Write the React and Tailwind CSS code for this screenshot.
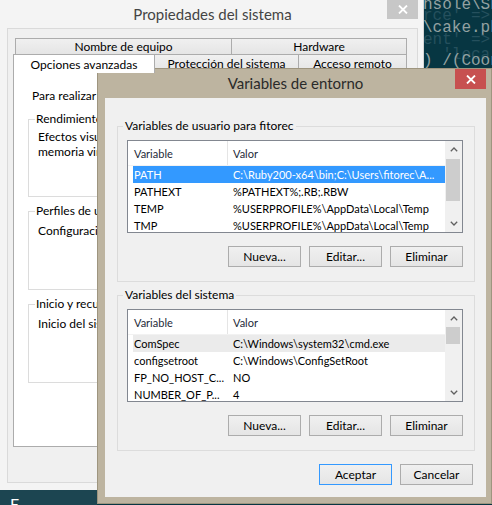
import React from "react";

const userVars = [
  { name: "PATH", value: "C:\\Ruby200-x64\\bin;C:\\Users\\fitorec\\A..." },
  { name: "PATHEXT", value: "%PATHEXT%;.RB;.RBW" },
  { name: "TEMP", value: "%USERPROFILE%\\AppData\\Local\\Temp" },
  { name: "TMP", value: "%USERPROFILE%\\AppData\\Local\\Temp" },
];

const systemVars = [
  { name: "ComSpec", value: "C:\\Windows\\system32\\cmd.exe" },
  { name: "configsetroot", value: "C:\\Windows\\ConfigSetRoot" },
  { name: "FP_NO_HOST_C...", value: "NO" },
  { name: "NUMBER_OF_P...", value: "4" },
];

// terminal text peeking out behind the windows
const termLines = [
  { text: "nsole\\Sh", top: "top-[-3px]", dim: false },
  { text: "rce' =>", top: "top-[8px]", dim: true },
  { text: "\\cake.ph", top: "top-[20px]", dim: false },
  { text: "ent' =>", top: "top-[32px]", dim: true },
  { text: "  'local", top: "top-[47px]", dim: true },
  { text: ") /(Coon", top: "top-[53px]", dim: false },
];

const CloseX = () => (
  <svg width="10" height="9" viewBox="0 0 10 9">
    <path d="M1 0.5 L9 8.5 M9 0.5 L1 8.5" stroke="white" strokeWidth="1.8" fill="none" />
  </svg>
);

const Chevron = ({ down }) => (
  <svg width="8" height="5" viewBox="0 0 8 5">
    <path
      d={down ? "M0.8 0.8 L4 4 L7.2 0.8" : "M0.8 4.2 L4 1 L7.2 4.2"}
      stroke="#606060"
      strokeWidth="1.3"
      fill="none"
    />
  </svg>
);

function Btn({ children, primary }) {
  return (
    <button
      type="button"
      className={
        primary
          ? "flex h-[21px] w-[73px] items-center justify-center border border-[#3399ff] bg-linear-to-b from-[#f0f0f0] to-[#e5e5e5] text-[12px] text-black"
          : "flex h-[21px] w-[73px] items-center justify-center border border-[#acacac] bg-linear-to-b from-[#f0f0f0] to-[#e5e5e5] text-[12px] text-black"
      }
    >
      {children}
    </button>
  );
}

function VarList({ rows, focused, thumbTop, thumbHeight }) {
  return (
    <div className="flex h-[93px] w-[336px] border border-[#828790] bg-white text-[11px] leading-[15px]">
      <div className="min-w-0 flex-1 overflow-hidden">
        {/* header */}
        <div className="flex h-[25px] border-b border-[#f2f2f2] text-[#1e2a3a]">
          <div className="flex w-[100px] shrink-0 items-center border-r border-[#e5e5e5] pl-[6px]">Variable</div>
          <div className="flex items-center pl-[5px]">Valor</div>
        </div>
        {rows.map((r, i) => (
          <div
            key={r.name}
            className={
              i === 0
                ? focused
                  ? "ml-[5px] flex h-[17px] items-center whitespace-nowrap bg-[#3399ff] text-white"
                  : "ml-[5px] flex h-[17px] items-center whitespace-nowrap bg-[#ebebeb] text-black"
                : "ml-[5px] flex h-[17px] items-center whitespace-nowrap text-black"
            }
          >
            <div className="w-[100px] shrink-0 overflow-hidden pl-[1px]">{r.name}</div>
            <div className="shrink-0">{r.value}</div>
          </div>
        ))}
      </div>
      {/* scrollbar */}
      <div className="flex w-[17px] shrink-0 flex-col bg-[#f0f0f0]">
        <div className="flex h-[17px] items-center justify-center">
          <Chevron />
        </div>
        <div className="relative flex-1">
          <div className="absolute left-[1px] w-[14px] bg-[#cdcdcd]" style={{ top: thumbTop, height: thumbHeight }} />
        </div>
        <div className="flex h-[17px] items-center justify-center">
          <Chevron down />
        </div>
      </div>
    </div>
  );
}

function VarGroup({ title, rows, focused, thumbTop, thumbHeight, className }) {
  return (
    <fieldset className={"w-[357px] border border-[#dcdcdc] " + className}>
      <legend className="ml-[5px] px-[2px] text-[12px] leading-[16px] text-black">{title}</legend>
      <div className="pb-[14px] pl-[9px] pr-[11px] pt-[6px]">
        <VarList rows={rows} focused={focused} thumbTop={thumbTop} thumbHeight={thumbHeight} />
        <div className="mt-[13px] flex justify-end gap-[8px]">
          <Btn>Nueva...</Btn>
          <Btn>Editar...</Btn>
          <Btn>Eliminar</Btn>
        </div>
      </div>
    </fieldset>
  );
}

function PageGroup({ title, lines, height, className, pad }) {
  return (
    <fieldset className={"ml-[14px] w-[366px] border border-[#dcdcdc] " + height + " " + className}>
      <legend className="ml-[6px] px-[1px] text-[12px] leading-[16px]">{title}</legend>
      <div className={"pl-[9px] text-[12px] leading-[15px] whitespace-nowrap " + pad}>
        {lines.map((l) => (
          <div key={l}>{l}</div>
        ))}
      </div>
    </fieldset>
  );
}

function SystemProperties() {
  return (
    <div className="absolute left-0 top-0 flex h-[490px] w-[424px] flex-col border-r border-[#d6d6d6] bg-[#f4f4f4] pb-[7px] pl-[7px] pr-[5px] text-black">
      <div className="flex h-[28px] items-center justify-center text-[15px] text-[#444]">Propiedades del sistema</div>
      <div className="absolute left-[387px] top-0 flex h-[19px] w-[31px] items-center justify-center bg-[#c7c7c7]">
        <CloseX />
      </div>
      <div className="flex-1 overflow-hidden border border-[#dadada] bg-[#f0f0f0] text-[12px] leading-[15px]">
        {/* tab headers */}
        <div className="ml-[7px] mt-[9px] flex h-[17px]">
          <div className="flex w-[217px] items-center justify-center border border-[#acacac] bg-linear-to-b from-[#f0f0f0] to-[#e5e5e5]">
            Nombre de equipo
          </div>
          <div className="-ml-px flex w-[176px] items-center justify-center border border-[#acacac] bg-linear-to-b from-[#f0f0f0] to-[#e5e5e5]">
            Hardware
          </div>
        </div>
        <div className="ml-[5px] flex h-[17px]">
          <div className="relative z-10 -mt-px flex h-[19px] w-[142px] items-center justify-center border-x border-t border-[#acacac] bg-white">
            Opciones avanzadas
          </div>
          <div className="flex w-[144px] items-center justify-center border-r border-[#acacac] bg-linear-to-b from-[#f0f0f0] to-[#e5e5e5]">
            Protección del sistema
          </div>
          <div className="flex w-[108px] items-center justify-center border-r border-[#acacac] bg-linear-to-b from-[#f0f0f0] to-[#e5e5e5]">
            Acceso remoto
          </div>
        </div>
        {/* tab page */}
        <div className="ml-[5px] h-[375px] w-[394px] overflow-hidden border border-[#acacac] bg-white">
          <div className="mt-[15px] whitespace-nowrap pl-[18px] leading-[16px]">
            Para realizar la mayoría de estos cambios, inicie sesión como administrador.
          </div>
          <PageGroup
            title="Rendimiento"
            lines={["Efectos visuales, programación del procesador, uso de memoria y", "memoria virtual"]}
            height="h-[86px]"
            className="mt-[7px]"
            pad="pt-[2px]"
          />
          <PageGroup
            title="Perfiles de usuario"
            lines={["Configuración del escritorio relacionada con el inicio de sesión"]}
            height="h-[87px]"
            className="mt-[6px]"
            pad="pt-[4px]"
          />
          <PageGroup
            title="Inicio y recuperación"
            lines={["Inicio del sistema, error del sistema e información de depuración"]}
            height="h-[87px]"
            className="mt-[6px]"
            pad="pt-[4px]"
          />
        </div>
      </div>
    </div>
  );
}

function EnvironmentVariables() {
  return (
    <div className="absolute left-[97px] top-[68px] flex h-[436px] w-[395px] flex-col border border-[#9e957f] bg-[#bdb4a0] pb-[6px] pl-[7px] pr-[5px] text-black">
      <div className="flex h-[29px] items-center justify-center text-[15px] text-[#2a2a2a]">Variables de entorno</div>
      <div className="absolute right-[5px] top-0 flex h-[20px] w-[31px] items-center justify-center bg-[#c75050]">
        <CloseX />
      </div>
      <div className="flex-1 bg-[#f0f0f0] px-[12px] pt-[20px]">
        <VarGroup
          title="Variables de usuario para fitorec"
          rows={userVars}
          focused
          thumbTop={1}
          thumbHeight={42}
        />
        <VarGroup
          title="Variables del sistema"
          rows={systemVars}
          thumbTop={0}
          thumbHeight={17}
          className="mt-[5px]"
        />
        <div className="mt-[13px] flex justify-end gap-[8px] pr-[1px]">
          <Btn primary>Aceptar</Btn>
          <Btn>Cancelar</Btn>
        </div>
      </div>
    </div>
  );
}

export default function App() {
  return (
    <div className="relative h-[505px] w-[492px] overflow-hidden bg-[#073642] font-[Lato,'Liberation_Sans',sans-serif]">
      {/* console behind, top right */}
      <div className="absolute left-[423px] top-0 h-[68px] w-[69px] overflow-hidden font-['Liberation_Mono',monospace] text-[16px] leading-[16px]">
        {termLines.map((l) => (
          <div
            key={l.text}
            className={
              l.dim
                ? "absolute left-0 whitespace-pre text-[#25505d] " + l.top
                : "absolute left-0 whitespace-pre text-[#93a1a1] " + l.top
            }
          >
            {l.text}
          </div>
        ))}
      </div>

      <SystemProperties />

      {/* strip at the bottom */}
      <div className="absolute bottom-0 left-0 flex h-[15px] w-[97px] bg-[#1c4551] text-[16px] leading-[16px] text-white">
        <span className="ml-[10px] mt-[6px]">E</span>
      </div>

      <EnvironmentVariables />
    </div>
  );
}
